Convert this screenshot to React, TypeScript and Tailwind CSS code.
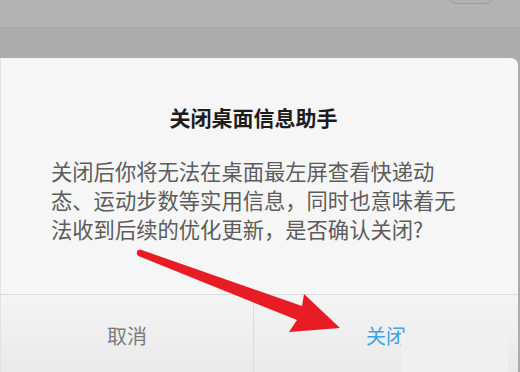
export default function App() {
  return (
    <div
      className="relative w-[520px] h-[372px] overflow-hidden bg-[#acacac]"
      style={{ fontFamily: '"Noto Sans CJK SC", "Noto Sans", sans-serif' }}
    >
      {/* dimmed page behind the dialog */}
      <div className="h-[28px] bg-[#b3b3b3] border-b border-[#a7a7a7] flex justify-end pr-[25px]">
        <div className="w-[48px] h-[14px] -mt-[10px] rounded-b-[10px] border border-[#9c9c9c]" />
      </div>
      <div className="h-[30px] bg-[#acacac]" />

      {/* dialog */}
      <div className="w-[518px] h-[320px] bg-[#f6f6f6] rounded-tr-[7px] border-l border-[#e2e2e2] flex flex-col">
        <div className="pt-[45px] pr-[12px] flex justify-center">
          <h2 className="text-[21px] leading-[28px] font-bold text-[#1c1c1c]">关闭桌面信息助手</h2>
        </div>
        <div className="mt-[25px] pl-[50px] text-[21.3px] leading-[29px] text-[#5c5c5c] whitespace-nowrap">
          <p>关闭后你将无法在桌面最左屏查看快递动</p>
          <p>态、运动步数等实用信息，同时也意味着无</p>
          <p>法收到后续的优化更新，是否确认关闭?</p>
        </div>
        <div className="mt-[51px] h-[82px] shrink-0 border-t border-[#dcdcdc] flex bg-gradient-to-b from-[#f4f4f4] to-[#e9e9e9]">
          <button type="button" className="w-[253px] border-r border-[#dcdcdc] text-[20px] text-[#7a7a7a]">
            取消
          </button>
          <button type="button" className="flex-1 text-[20px] text-[#3ea3e6]">
            关闭
          </button>
        </div>
      </div>

      {/* edit patch over the right button */}
      <div className="absolute left-[401px] top-[333px] w-[107px] h-[39px] bg-[#f0f0f0]" />

      {/* red arrow annotation */}
      <svg className="absolute inset-0" width="520" height="372" viewBox="0 0 520 372" aria-hidden="true">
        <circle cx="140" cy="253" r="3.2" fill="#e71c24" />
        <polygon
          points="141,249.8 302,306 304,294 340,328 289,332 297,320 139,256.2"
          fill="#e71c24"
        />
      </svg>
    </div>
  );
}
